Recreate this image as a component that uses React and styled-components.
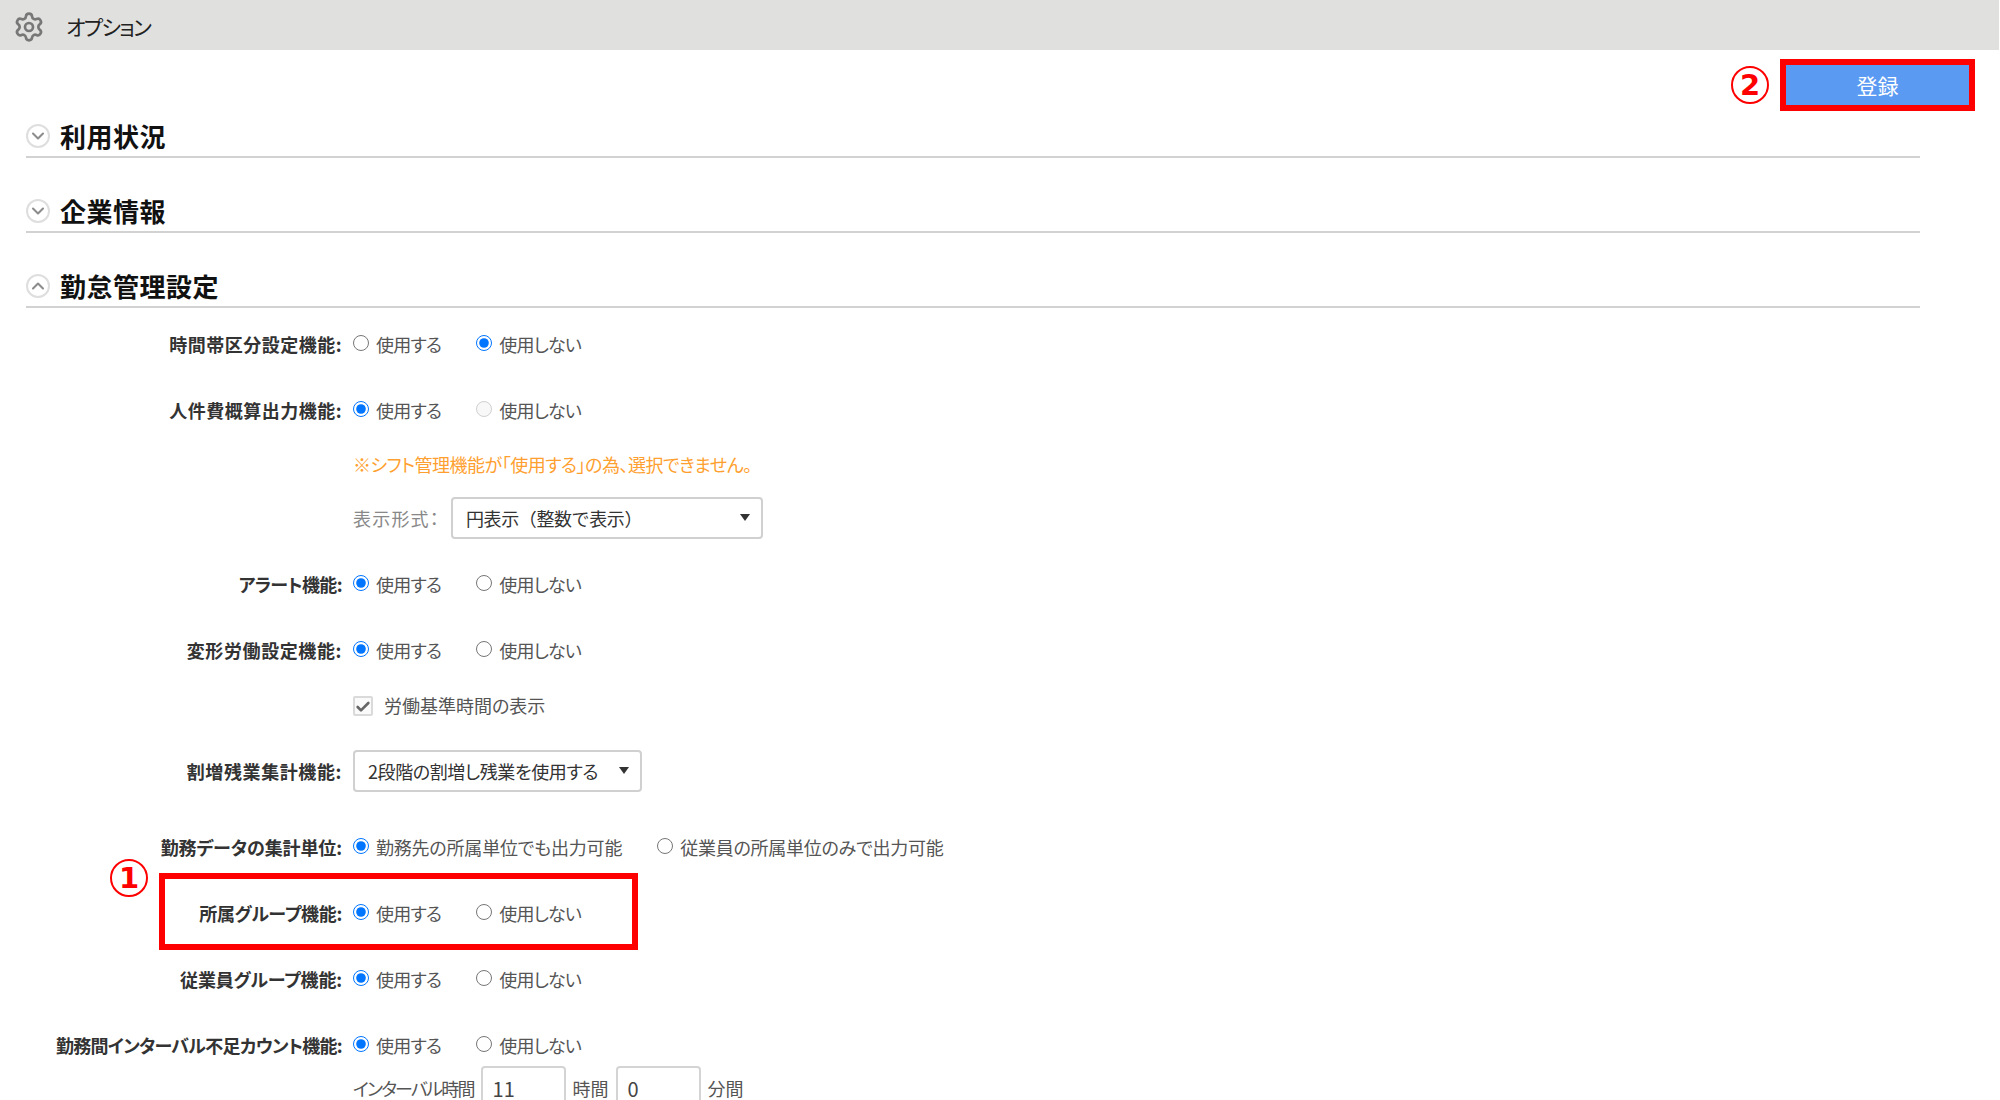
import React from 'react';
import styled, { createGlobalStyle } from 'styled-components';
import { Settings, ChevronDown, ChevronUp, Check } from 'lucide-react';

const GlobalStyle = createGlobalStyle`
  html, body {
    margin: 0;
    padding: 0;
    height: 1100px;
    overflow: hidden;
    background: #fff;
    font-family: "Noto Sans CJK JP", "Noto Sans", sans-serif;
    font-feature-settings: "palt";
    color: #444;
  }
  * { box-sizing: border-box; }
`;

const Header = styled.header`
  display: flex;
  align-items: center;
  height: 50px;
  margin-right: 1px;
  padding: 3px 0 0 13px;
  gap: 21px;
  background: #e0e0de;
  color: #777;
`;

const HeaderTitle = styled.span`
  margin-top: -2px;
  font-size: 21px;
  letter-spacing: -1.6px;
  color: #222;
`;

const Toolbar = styled.div`
  display: flex;
  justify-content: flex-end;
  align-items: center;
  gap: 17px;
  height: 40px;
  margin-top: 15px;
  margin-bottom: 19px;
  padding-right: 31px;
`;

const RoundMark = styled.span`
  display: flex;
  align-items: center;
  justify-content: center;
  width: 38px;
  height: 38px;
  border: 2px solid #f00;
  border-radius: 50%;
  color: #f00;
  font-family: "DejaVu Sans", sans-serif;
  font-size: 29px;
  font-weight: 700;
  line-height: 1;
`;

const SaveButton = styled.button`
  width: 183px;
  height: 40px;
  border: none;
  outline: 6px solid #f00;
  background: #5a9af2;
  color: #fff;
  font-family: inherit;
  font-feature-settings: inherit;
  font-size: 21px;
`;

const Content = styled.main`
  width: 1920px;
  padding-left: 26px;
`;

const SectionHead = styled.div`
  display: flex;
  align-items: center;
  gap: 10px;
  height: 34px;
  border-bottom: 2px solid #d2d2d2;
  padding-bottom: 8px;
  & + & {
    margin-top: 41px;
  }
`;

const ChevronCircle = styled.span`
  display: flex;
  align-items: center;
  justify-content: center;
  width: 24px;
  height: 24px;
  border: 2px solid #dedede;
  border-radius: 50%;
  color: #8c8c8c;
`;

const SectionTitle = styled.h2`
  margin: 0;
  font-size: 26px;
  font-weight: 700;
  letter-spacing: 0.5px;
  line-height: 1;
  color: #111;
`;

const Row = styled.div`
  position: relative;
  display: flex;
  align-items: center;
  gap: ${props => props.$gap ?? 11}px;
  min-height: 24px;
  line-height: 24px;
  margin-top: ${props => props.$top}px;
  padding-left: ${props => (props.$indent ? 327 : 0)}px;
`;

const Label = styled.label`
  width: 316px;
  text-align: right;
  font-size: 18px;
  font-weight: 700;
  letter-spacing: ${props => props.$spacing ?? 0.5}px;
  color: #333;
  white-space: nowrap;
`;

const Options = styled.div`
  display: flex;
  align-items: center;
  gap: 35px;
`;

const Option = styled.label`
  display: flex;
  align-items: center;
  gap: 7px;
  font-size: 18px;
  letter-spacing: ${props => props.$spacing ?? -0.8}px;
  color: #555;
  white-space: nowrap;
`;

const Radio = styled.input.attrs({ type: 'radio' })`
  width: 16px;
  height: 16px;
  margin: 0 0 3px;
  accent-color: #0075ff;
`;

const Note = styled.span`
  font-size: 18px;
  letter-spacing: -0.5px;
  color: #ff9f30;
`;

const InlineLabel = styled.span`
  font-size: 18px;
  letter-spacing: ${props => props.$spacing ?? 0}px;
  color: ${props => (props.$muted ? '#888' : '#555')};
  white-space: nowrap;
`;

const Select = styled.div`
  display: flex;
  align-items: center;
  justify-content: space-between;
  width: ${props => props.$width}px;
  height: 42px;
  padding: 0 11px 0 13px;
  border: 2px solid #d0d0d0;
  border-radius: 4px;
  background: #fff;
  font-size: 18px;
  font-feature-settings: ${props => (props.$fullWidth ? 'normal' : '"palt"')};
  letter-spacing: -0.4px;
  color: #333;
`;

const Caret = styled.span`
  width: 0;
  height: 0;
  margin-bottom: 2px;
  border-left: 5px solid transparent;
  border-right: 5px solid transparent;
  border-top: 7px solid #333;
`;

const CheckBox = styled.span`
  display: flex;
  align-items: center;
  justify-content: center;
  width: 20px;
  height: 20px;
  margin-top: 1px;
  padding-top: 3px;
  border: 2px solid #dadada;
  border-radius: 2px;
  background: #fafafa;
  color: #666;
`;

const NumberInput = styled.input`
  width: 85px;
  height: 44px;
  padding: 0 10px;
  border: 2px solid #d4d4d4;
  border-radius: 4px;
  font-family: inherit;
  font-size: 20px;
  color: #444;
`;

const HighlightBox = styled.div`
  position: absolute;
  top: -28px;
  left: 133px;
  width: 479px;
  height: 77px;
  border: 6px solid #f00;
  pointer-events: none;
`;

const HighlightMark = styled(RoundMark)`
  position: absolute;
  top: -42px;
  left: 84px;
`;

function RadioPair({ name, value, disabled, yes = '使用する', no = '使用しない', yesSpacing, noSpacing }) {
  return (
    <Options>
      <Option $spacing={yesSpacing}>
        <Radio name={name} defaultChecked={value} />
        {yes}
      </Option>
      <Option $spacing={noSpacing}>
        <Radio name={name} defaultChecked={!value} disabled={disabled} />
        {no}
      </Option>
    </Options>
  );
}

export default function App() {
  return (
    <>
      <GlobalStyle />
      <Header>
        <Settings size={32} strokeWidth={2} />
        <HeaderTitle>オプション</HeaderTitle>
      </Header>
      <Toolbar>
        <RoundMark>2</RoundMark>
        <SaveButton>登録</SaveButton>
      </Toolbar>
      <Content>
        <SectionHead>
          <ChevronCircle><ChevronDown size={20} strokeWidth={2.5} /></ChevronCircle>
          <SectionTitle>利用状況</SectionTitle>
        </SectionHead>
        <SectionHead>
          <ChevronCircle><ChevronDown size={20} strokeWidth={2.5} /></ChevronCircle>
          <SectionTitle>企業情報</SectionTitle>
        </SectionHead>
        <SectionHead>
          <ChevronCircle><ChevronUp size={20} strokeWidth={2.5} /></ChevronCircle>
          <SectionTitle>勤怠管理設定</SectionTitle>
        </SectionHead>

        <Row $top={24}>
          <Label>時間帯区分設定機能:</Label>
          <RadioPair name="timezone" value={false} />
        </Row>
        <Row $top={42}>
          <Label>人件費概算出力機能:</Label>
          <RadioPair name="labor" value disabled />
        </Row>
        <Row $top={30} $indent>
          <Note>※シフト管理機能が「使用する」の為、選択できません。</Note>
        </Row>
        <Row $top={21} $indent>
          <InlineLabel $muted $spacing={1.2}>表示形式：</InlineLabel>
          <Select $width={312} $fullWidth>
            円表示（整数で表示）
            <Caret />
          </Select>
        </Row>
        <Row $top={33}>
          <Label $spacing={-0.6}>アラート機能:</Label>
          <RadioPair name="alert" value />
        </Row>
        <Row $top={42}>
          <Label $spacing={0.6}>変形労働設定機能:</Label>
          <RadioPair name="flex" value />
        </Row>
        <Row $top={31} $indent>
          <CheckBox><Check size={16} strokeWidth={4} /></CheckBox>
          <InlineLabel>労働基準時間の表示</InlineLabel>
        </Row>
        <Row $top={33}>
          <Label $spacing={0.6}>割増残業集計機能:</Label>
          <Select $width={289}>
            2段階の割増し残業を使用する
            <Caret />
          </Select>
        </Row>
        <Row $top={43}>
          <Label $spacing={-0.1}>勤務データの集計単位:</Label>
          <RadioPair
            name="unit"
            value
            yes="勤務先の所属単位でも出力可能"
            no="従業員の所属単位のみで出力可能"
            yesSpacing={-0.2}
            noSpacing={-0.25}
          />
        </Row>
        <Row $top={42}>
          <Label $spacing={-0.3}>所属グループ機能:</Label>
          <RadioPair name="group" value />
          <HighlightBox />
          <HighlightMark>1</HighlightMark>
        </Row>
        <Row $top={42}>
          <Label $spacing={-0.15}>従業員グループ機能:</Label>
          <RadioPair name="staffgroup" value />
        </Row>
        <Row $top={42}>
          <Label $spacing={-0.7}>勤務間インターバル不足カウント機能:</Label>
          <RadioPair name="interval" value />
        </Row>
        <Row $top={9} $indent $gap={7}>
          <InlineLabel $spacing={-1.8}>インターバル時間</InlineLabel>
          <NumberInput defaultValue="11" />
          <InlineLabel>時間</InlineLabel>
          <NumberInput defaultValue="0" />
          <InlineLabel>分間</InlineLabel>
        </Row>
      </Content>
    </>
  );
}
